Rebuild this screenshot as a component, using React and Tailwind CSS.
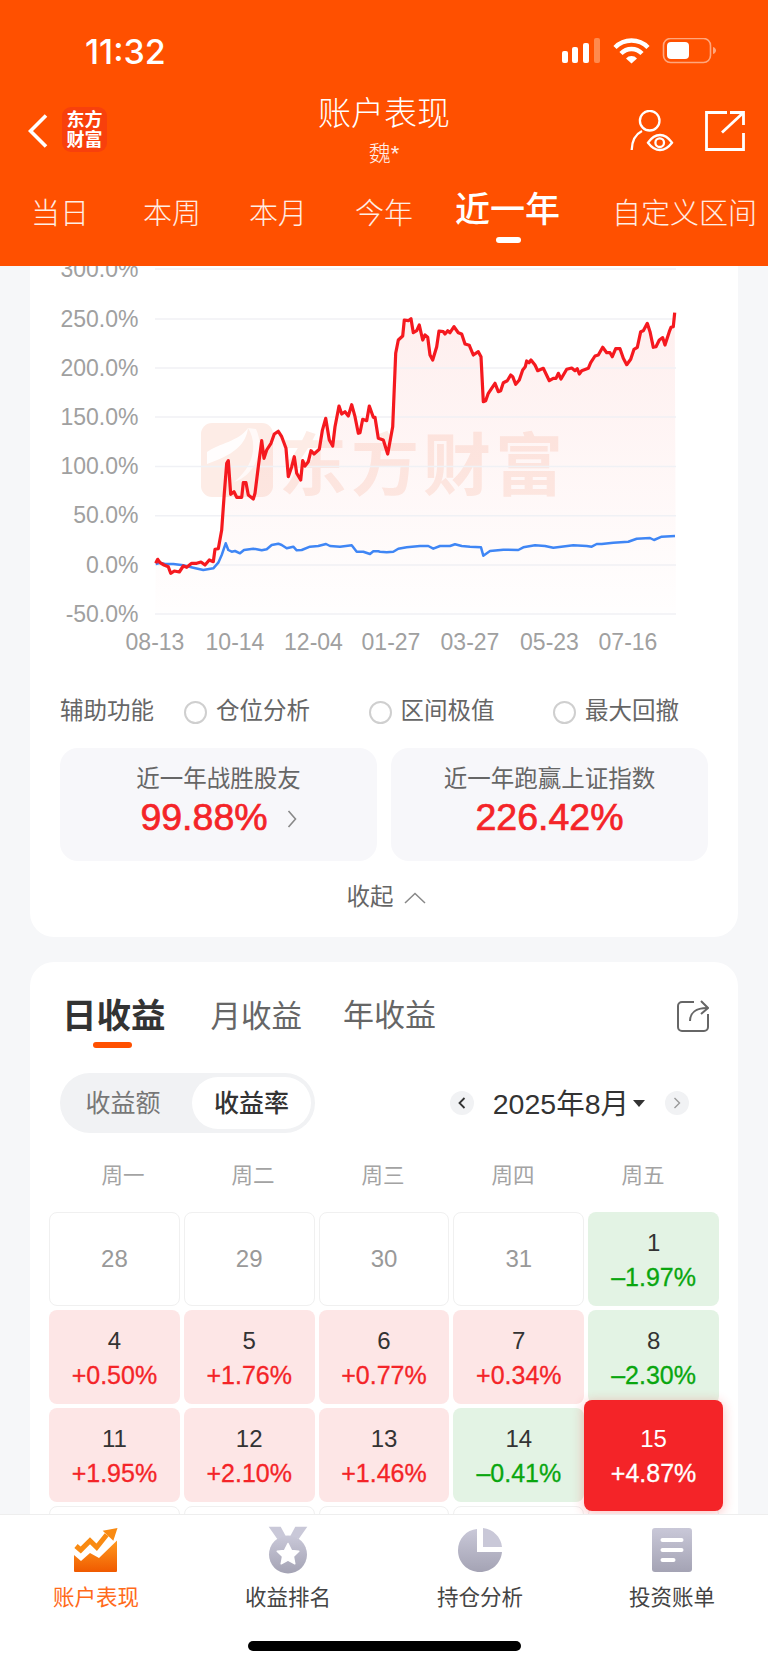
import React from 'react';

// curve samples are stored at 3x, offset from the chart corner
const redLeft = [[347,910],[353,898],[360,908],[372,915],[385,920],[392,940],[403,933],[418,936],[430,918],[440,922],[455,910],[470,910],[483,906],[495,915],[508,900],[520,905],[525,868],[535,866],[545,810],[553,700],[560,610],[565,602],[572,703],[582,695],[590,712],[605,712],[610,668],[618,668],[625,705],[640,717],[645,700],[655,620],[665,542],[672,595],[680,570],[693,550],[703,522],[715,514],[725,530],[738,565],[745,650],[755,620],[763,590],[770,640],[782,660],[788,602],[795,618],[805,605],[813,572],[822,582],[838,568],[847,512],[857,475],[868,540],[878,558],[885,500],[897,438],[905,462],[915,455],[925,468],[935,434],[945,470],[955,520],[960,518],[968,478],[980,482],[988,438],[1000,472],[1005,472],[1015,535]];
const redRight = [[10,540],[23,582],[38,500],[47,280],[55,240],[68,228],[73,180],[85,182],[93,176],[100,218],[110,212],[118,195],[128,240],[135,225],[143,232],[150,285],[158,300],[170,260],[177,213],[190,215],[195,222],[203,212],[210,218],[222,200],[235,218],[245,222],[255,252],[268,256],[280,285],[295,275],[303,290],[310,425],[317,422],[325,400],[345,370],[355,395],[362,392],[370,368],[382,362],[392,345],[398,350],[407,373],[418,360],[428,330],[436,320],[440,303],[447,308],[453,300],[465,315],[473,332],[490,325],[508,362],[520,355],[528,355],[535,340],[543,357],[560,328],[575,324],[585,332],[592,326],[598,342],[605,332],[625,325],[632,308],[645,288],[655,285],[668,262],[680,278],[690,278],[697,290],[707,266],[720,266],[730,295],[740,314],[752,298],[762,268],[772,262],[782,215],[790,212],[802,190],[810,215],[820,262],[828,260],[838,240],[848,233],[855,255],[868,215],[873,202],[880,200],[884,158]];
const blueLeft = [[347,912],[360,908],[375,912],[400,912],[430,916],[460,923],[490,930],[520,925],[535,908],[545,885],[557,850],[565,870],[575,875],[585,873],[600,880],[612,870],[640,866],[650,868],[665,871],[680,868],[695,855],[715,851],[725,855],[740,865],[760,860],[770,871],[785,870],[810,860],[835,858],[858,852],[870,858],[900,860],[935,856],[950,875],[970,875],[990,882],[1000,874],[1015,874]];
const blueRight = [[0,875],[20,877],[40,875],[55,866],[80,862],[120,858],[145,858],[160,866],[180,858],[210,858],[225,853],[245,858],[270,860],[303,862],[310,887],[330,873],[370,869],[415,870],[430,862],[465,856],[495,858],[520,863],[580,856],[620,858],[635,860],[650,852],[665,852],[700,848],[745,845],[770,836],[810,834],[822,840],[845,830],[885,828]];

const toPoints = (list, left) =>
  list.map(([x, y]) => `${(x / 3 + left).toFixed(1)},${(y / 3 + 260).toFixed(1)}`).join(' ');

const redLine = `${toPoints(redLeft, 40)} ${toPoints(redRight, 380)}`;
const blueLine = `${toPoints(blueLeft, 40)} ${toPoints(blueRight, 380)}`;

const gridRows = [
  ['300.0%', 269], ['250.0%', 319], ['200.0%', 368], ['150.0%', 417],
  ['100.0%', 466.5], ['50.0%', 515.7], ['0.0%', 565], ['-50.0%', 614],
];
const dateLabels = [
  ['08-13', 155], ['10-14', 235], ['12-04', 313.5], ['01-27', 391],
  ['03-27', 470], ['05-23', 549.5], ['07-16', 628],
];

const ReturnChart = () => (
  <svg viewBox="30 266 708 400" width="708" height="400" className="block shrink-0">
    <defs>
      <linearGradient id="areaFill" x1="0" y1="0" x2="0" y2="1">
        <stop offset="0" stopColor="#f5322a" stopOpacity="0.08" />
        <stop offset="1" stopColor="#f5322a" stopOpacity="0.004" />
      </linearGradient>
    </defs>
    {/* 水印 */}
    <rect x="201" y="423" width="72" height="74" rx="11" fill="#fdece6" />
    <path d="M207 452c12-9 31-10 41-24-2 17-15 27-41 36z" fill="#fff" opacity="0.9" />
    <path d="M248 428c10 16 6 38-14 54 20-6 32-32 22-53z" fill="#fff" opacity="0.7" />
    <text x="279" y="490" fontSize="68" fontWeight="700" fill="#fdece6" letterSpacing="4">东方财富</text>
    <polygon points={`155,614 ${redLine} 676,614`} fill="url(#areaFill)" />
    {gridRows.map(([label, y]) => (
      <g key={label}>
        <line x1="155" x2="676" y1={y} y2={y} stroke="#f0f1f5" strokeWidth="1.5" />
        <text x="138.5" y={y + 7.5} textAnchor="end" fontSize="23" fill="#a0a0a0">{label}</text>
      </g>
    ))}
    {dateLabels.map(([label, x]) => (
      <text key={label} x={x} y="649.5" textAnchor="middle" fontSize="23" fill="#a0a0a0">{label}</text>
    ))}
    <polyline points={blueLine} fill="none" stroke="#3f86f5" strokeWidth="2.5" strokeLinejoin="round" />
    <polyline points={redLine} fill="none" stroke="#f5191f" strokeWidth="3.2" strokeLinejoin="round" />
  </svg>
);

const StatusBar = () => (
  <div className="flex h-[85px] items-start">
    <div className="ml-[85px] mt-[32px] text-[34px] leading-[40px] font-medium text-white font-['Inter',sans-serif]">11:32</div>
    <svg viewBox="0 0 155 26" width="155" height="26" className="ml-auto mr-[51px] mt-[38px]">
      <rect x="0" y="13" width="6" height="12" rx="2" fill="#fff" />
      <rect x="10" y="9" width="6" height="16" rx="2" fill="#fff" />
      <rect x="21" y="5" width="6" height="20" rx="2" fill="#fff" />
      <rect x="32" y="0" width="6" height="25" rx="2" fill="#ff8a4d" />
      <path d="M53 9.500a23 23 0 0 1 33 0" fill="none" stroke="#fff" strokeWidth="4.4" />
      <path d="M59 15.500a14.500 14.500 0 0 1 21 0" fill="none" stroke="#fff" strokeWidth="4.4" />
      <path d="M64 20.500a7.500 7.500 0 0 1 11 0l-5.500 5z" fill="#fff" />
      <rect x="101.500" y="0.500" width="47" height="24" rx="7" fill="none" stroke="#ffa77d" strokeWidth="1.600" />
      <rect x="105" y="4" width="22" height="17" rx="4" fill="#fff" />
      <path d="M151 9v7c2-.6 3-2 3-3.500s-1-2.900-3-3.500z" fill="#ffa77d" />
    </svg>
  </div>
);

const NavBar = () => (
  <div className="relative flex h-[80px] items-start">
    <svg viewBox="0 0 20 34" width="20" height="34" className="ml-[28px] mt-[29px]">
      <path d="M18 1.500 2.500 17 18 32.500" fill="none" stroke="#fff" strokeWidth="3.600" />
    </svg>
    <div className="ml-[14px] mt-[22px] flex h-[45px] w-[45px] flex-col items-center justify-center rounded-[9px] bg-[#f8400c] text-[18px] leading-[20px] font-bold text-white">
      <span>东方</span>
      <span>财富</span>
    </div>
    <div className="absolute left-0 right-0 top-[8px] flex flex-col items-center text-white">
      <div className="text-[33px] leading-[42px] font-light">账户表现</div>
      <div className="mt-[7px] text-[22px] leading-[24px] font-light opacity-90">魏*</div>
    </div>
    <svg viewBox="0 0 44 42" width="44" height="42" className="ml-auto mt-[25px]" fill="none" stroke="#fff" strokeWidth="2.300">
      <circle cx="19.700" cy="10.700" r="9.800" />
      <path d="M1.700 40C2 30 6 24 12 21" />
      <path d="M18 32.700C22 27 26 25 30 25s8 2 12 7.700C38 38 34 40 30 40s-8-2-12-7.300z" />
      <circle cx="29.700" cy="32.700" r="4.300" />
    </svg>
    <svg viewBox="0 0 40 40" width="40" height="40" className="ml-[31px] mr-[23px] mt-[26px]" fill="none" stroke="#fff" strokeWidth="2.800">
      <path d="M22 1.500H1.500v37h37V22" />
      <path d="M17 21.500 38 2" />
      <path d="M25 1.500h13.500V14" />
    </svg>
  </div>
);

const RangeTabs = () => (
  <div className="relative flex h-[101px] items-start text-[29px] leading-[36px] font-light text-white/90">
    <span className="ml-[31px] mt-[31px]">当日</span>
    <span className="ml-[54px] mt-[31px]">本周</span>
    <span className="ml-[48px] mt-[31px]">本月</span>
    <span className="ml-[48px] mt-[31px]">今年</span>
    <span className="ml-[42px] mt-[25px] text-[35px] leading-[40px] font-medium text-white">近一年</span>
    <span className="ml-[52px] mt-[31px] whitespace-nowrap">自定义区间</span>
    <div className="absolute bottom-[23px] left-[496px] h-[6px] w-[25px] rounded-full bg-white" />
  </div>
);

const Radio = ({ label }) => (
  <div className="flex w-[184.5px] items-center gap-[9px]">
    <div className="h-[23px] w-[23px] rounded-full border-2 border-[#cfcfcf] bg-white" />
    <span>{label}</span>
  </div>
);

const redNum = "text-[37.5px] leading-[44px] text-[#f42428] [-webkit-text-stroke:0.7px_#f42428]";

const OverviewCard = () => (
  <section className="mx-[30px] flex flex-col rounded-b-[24px] bg-white pb-[23px]">
    <ReturnChart />
    <div className="ml-[30px] mt-[30px] flex h-[32px] items-center text-[23.5px] text-[#666]">
      <span className="w-[124px]">辅助功能</span>
      <Radio label="仓位分析" />
      <Radio label="区间极值" />
      <Radio label="最大回撤" />
    </div>
    <div className="mx-[30px] mt-[20px] grid grid-cols-2 gap-[14px]">
      <div className="flex h-[113px] flex-col items-center rounded-[18px] bg-[#f7f7fa] pt-[15px]">
        <div className="text-[23.5px] leading-[32px] text-[#666]">近一年战胜股友</div>
        <div className="flex items-center">
          <span className={redNum}>99.88%</span>
          <svg viewBox="0 0 10 18" width="10" height="18" className="ml-[19px] mt-[3px]">
            <path d="M1.500 1 8.500 9l-7 8" fill="none" stroke="#888" strokeWidth="1.600" />
          </svg>
        </div>
      </div>
      <div className="flex h-[113px] flex-col items-center rounded-[18px] bg-[#f7f7fa] pt-[15px]">
        <div className="text-[23.5px] leading-[32px] text-[#666]">近一年跑赢上证指数</div>
        <span className={redNum}>226.42%</span>
      </div>
    </div>
    <div className="mt-[21px] flex h-[32px] items-center justify-center pl-[4px] text-[23.5px] text-[#666]">
      <span>收起</span>
      <svg viewBox="0 0 22 12" width="22" height="12" className="ml-[10px]">
        <path d="M1 11 11 1.500 21 11" fill="none" stroke="#888" strokeWidth="1.500" />
      </svg>
    </div>
  </section>
);

const calendarRows = [
  [['28'], ['29'], ['30'], ['31'], ['1', '–1.97%', 'down']],
  [['4', '+0.50%', 'up'], ['5', '+1.76%', 'up'], ['6', '+0.77%', 'up'], ['7', '+0.34%', 'up'], ['8', '–2.30%', 'down']],
  [['11', '+1.95%', 'up'], ['12', '+2.10%', 'up'], ['13', '+1.46%', 'up'], ['14', '–0.41%', 'down'], ['15', '+4.87%', 'today']],
  [[''], [''], [''], [''], ['']],
];

const DayCell = ({ day, pct, kind }) => {
  if (!pct) {
    return (
      <div className="flex h-[94px] items-center justify-center rounded-[8px] border border-[#f0f0f0] bg-white text-[24px] text-[#999]">
        {day}
      </div>
    );
  }
  if (kind === 'today') {
    return (
      <div className="relative z-10 flex h-[94px] flex-col items-center pt-[16px] text-white">
        <div className="absolute -bottom-[9px] -left-[4.500px] -right-[4px] -top-[8px] rounded-[8px] bg-[#f42428] shadow-[0_2px_12px_rgba(244,36,40,0.3)]" />
        <span className="relative text-[24px] leading-[30px]">{day}</span>
        <span className="relative mt-[4px] text-[25px] leading-[30px] [-webkit-text-stroke:0.3px_#fff]">{pct}</span>
      </div>
    );
  }
  const up = kind === 'up';
  return (
    <div className={up ? 'flex h-[94px] flex-col items-center rounded-[8px] bg-[#fde6e6] pt-[16px]' : 'flex h-[94px] flex-col items-center rounded-[8px] bg-[#e3f3e4] pt-[16px]'}>
      <span className="text-[24px] leading-[30px] text-[#333]">{day}</span>
      <span className={up ? 'mt-[4px] text-[25px] leading-[30px] text-[#f42428] [-webkit-text-stroke:0.3px_#f42428]' : 'mt-[4px] text-[25px] leading-[30px] text-[#09a60f] [-webkit-text-stroke:0.3px_#09a60f]'}>{pct}</span>
    </div>
  );
};

const CalendarCard = () => (
  <section className="mx-[30px] mt-[25px] flex flex-col rounded-t-[24px] bg-white pt-[34px]">
    <div className="flex items-start pl-[32px] pr-[29px]">
      <div className="flex flex-col items-center">
        <span className="text-[34.5px] leading-[40px] font-bold text-[#333]">日收益</span>
        <div className="mr-[3px] mt-[6px] h-[6px] w-[39px] rounded-full bg-[#ff5000]" />
      </div>
      <span className="ml-[45px] text-[30.5px] leading-[40px] text-[#666]">月收益</span>
      <span className="ml-[41px] text-[31px] leading-[40px] text-[#666]">年收益</span>
      <svg viewBox="0 0 32 33" width="32" height="33" className="ml-auto mt-[3px]" fill="none" stroke="#666" strokeWidth="2">
        <path d="M17 3H5a4 4 0 0 0-4 4v21a4 4 0 0 0 4 4h22a4 4 0 0 0 4-4V15" />
        <path d="M13 22c0-8 6-13 17-13" />
        <path d="M24 2l7 7-7 6" />
      </svg>
    </div>
    <div className="mt-[25px] flex items-center pl-[30px] pr-[49px]">
      <div className="flex h-[60px] w-[255px] items-center rounded-full bg-[#f1f2f4] p-[4px] text-[25px]">
        <span className="mt-[2px] w-[118px] text-center text-[#777]">收益额</span>
        <span className="ml-[10px] flex h-[52px] w-[119px] items-center justify-center rounded-full bg-white pt-[2px] font-medium text-[#333]">收益率</span>
      </div>
      <div className="ml-auto flex h-[24px] w-[24px] items-center justify-center rounded-full bg-[#f1f2f4]">
        <svg viewBox="0 0 8 12" width="8" height="12"><path d="M6.500 1 1.500 6l5 5" fill="none" stroke="#333" strokeWidth="1.800" /></svg>
      </div>
      <span className="ml-[19px] mt-[3px] text-[28.5px] text-[#333]">2025年8月</span>
      <svg viewBox="0 0 12 7" width="12" height="7" className="ml-[4px]"><path d="M0 0h12L6 7z" fill="#333" /></svg>
      <div className="ml-[20px] flex h-[24px] w-[24px] items-center justify-center rounded-full bg-[#f1f2f4]">
        <svg viewBox="0 0 8 12" width="8" height="12"><path d="M1.500 1l5 5-5 5" fill="none" stroke="#999" strokeWidth="1.400" /></svg>
      </div>
    </div>
    <div className="ml-[28px] mt-[27px] grid h-[30px] w-[650px] grid-cols-5 items-center text-center text-[21.5px] text-[#a3a3a3]">
      <span>周一</span>
      <span>周二</span>
      <span>周三</span>
      <span>周四</span>
      <span>周五</span>
    </div>
    <div className="ml-[19px] mt-[22px] grid w-[670px] grid-cols-5 gap-[4px]">
      {calendarRows.flat().map(([day, pct, kind], i) => (
        <DayCell key={i} day={day} pct={pct} kind={kind} />
      ))}
    </div>
  </section>
);

const TabItem = ({ label, active, children }) => (
  <div className="flex flex-col items-center">
    <div className="flex h-[48px] items-center justify-center">{children}</div>
    <span className={active ? 'mt-[10px] text-[21.5px] leading-[28px] text-[#ff6a1a]' : 'mt-[10px] text-[21.5px] leading-[28px] text-[#444]'}>{label}</span>
  </div>
);

const BottomTabs = () => (
  <nav className="relative h-[149px] shrink-0 border-t border-[#eeeeee] bg-white pt-[11px]">
    <div className="grid grid-cols-4">
      <TabItem label="账户表现" active>
        <svg viewBox="0 0 44 44" width="44" height="44">
          <defs>
            <linearGradient id="trendFill" x1="0" y1="0" x2="0" y2="1">
              <stop offset="0" stopColor="#ff9a1f" />
              <stop offset="1" stopColor="#f05a00" />
            </linearGradient>
          </defs>
          <path d="M2 18l4.700 4 9.300-9.300 6.700 6.600 10-12.600" fill="none" stroke="#f98a12" strokeWidth="5" strokeLinejoin="miter" />
          <path d="M43.500 0 28.700 2.700 39.300 12.700z" fill="#f98a12" />
          <path d="M0 27l7 6 9-8 9 5 18-17.500V43a1 1 0 0 1-1 1H1a1 1 0 0 1-1-1z" fill="url(#trendFill)" />
        </svg>
      </TabItem>
      <TabItem label="收益排名">
        <svg viewBox="0 0 40 48" width="40" height="48">
          <defs>
            <linearGradient id="medalFill" x1="0" y1="0" x2="0" y2="1">
              <stop offset="0" stopColor="#c9c8d8" />
              <stop offset="1" stopColor="#a4a3b4" />
            </linearGradient>
          </defs>
          <path d="M.7.700h12L17.700 10l-8.400 3zM39.300.700h-12L22.300 10l8.400 3z" fill="#c9c8d8" />
          <circle cx="20" cy="28.500" r="19" fill="url(#medalFill)" />
          <path d="m20 17.500 3.400 6.900 7.400.9-5.400 5.100 1.400 7.400-6.800-3.700-6.800 3.700 1.400-7.400-5.400-5.100 7.400-.9z" fill="#fff" stroke="#fff" strokeWidth="1.500" strokeLinejoin="round" />
        </svg>
      </TabItem>
      <TabItem label="持仓分析">
        <svg viewBox="0 0 44 44" width="44" height="44">
          <defs>
            <linearGradient id="pieFill" x1="0" y1="0" x2="0" y2="1">
              <stop offset="0" stopColor="#c9c8d8" />
              <stop offset="1" stopColor="#a4a3b4" />
            </linearGradient>
          </defs>
          <path d="M19 1C8.500 2 0 10.500 0 22.500 0 34.500 9.500 44 22 44c12 0 21-9 22-20H19z" fill="url(#pieFill)" />
          <path d="M25 0c10 1 18 9 19 19H25z" fill="#c9c8d8" />
        </svg>
      </TabItem>
      <TabItem label="投资账单">
        <svg viewBox="0 0 40 44" width="40" height="44">
          <defs>
            <linearGradient id="billFill" x1="0" y1="0" x2="0" y2="1">
              <stop offset="0" stopColor="#c9c8d8" />
              <stop offset="1" stopColor="#a4a3b4" />
            </linearGradient>
          </defs>
          <rect width="40" height="44" rx="3" fill="url(#billFill)" />
          <rect x="8.500" y="10" width="23" height="4" rx="2" fill="#fff" />
          <rect x="8.500" y="20" width="23" height="4" rx="2" fill="#fff" />
          <rect x="8.500" y="30" width="15" height="4" rx="2" fill="#fff" />
        </svg>
      </TabItem>
    </div>
    <div className="mx-auto mt-[29px] h-[10px] w-[273px] rounded-full bg-black" />
  </nav>
);

export default function App() {
  return (
    <div className="flex h-[1663px] w-[768px] flex-col overflow-hidden bg-[#f6f7f9] font-['Liberation_Sans','Noto_Sans_CJK_SC',sans-serif]">
      <header className="h-[266px] shrink-0 bg-[#ff5000]">
        <StatusBar />
        <NavBar />
        <RangeTabs />
      </header>
      <main className="min-h-0 flex-1 overflow-hidden">
        <OverviewCard />
        <CalendarCard />
      </main>
      <BottomTabs />
    </div>
  );
}
